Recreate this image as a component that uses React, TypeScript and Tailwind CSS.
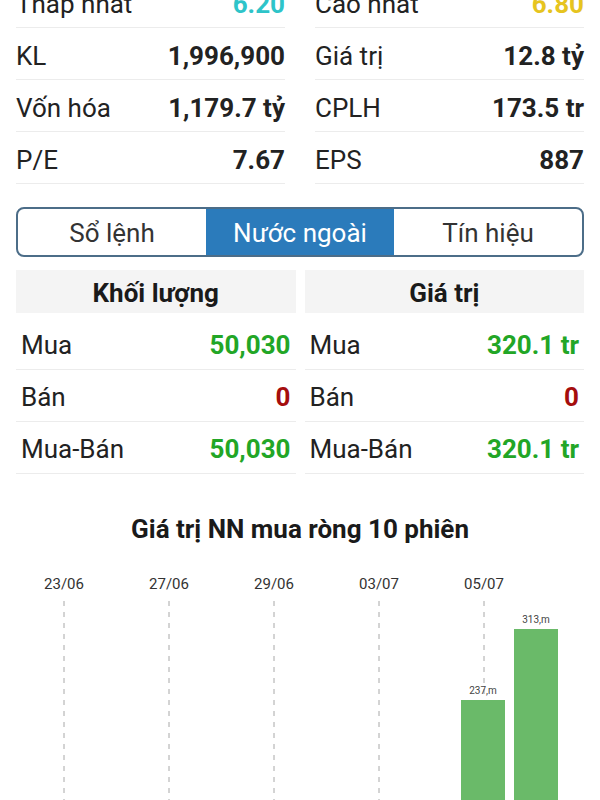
import React from 'react';

type Stat = { label: string; value: string; color?: string };

const stats: [Stat, Stat][] = [
  [
    { label: 'Thấp nhất', value: '6.20', color: 'text-[#2ec4c9]' },
    { label: 'Cao nhất', value: '6.80', color: 'text-[#e6c41f]' },
  ],
  [
    { label: 'KL', value: '1,996,900' },
    { label: 'Giá trị', value: '12.8 tỷ' },
  ],
  [
    { label: 'Vốn hóa', value: '1,179.7 tỷ' },
    { label: 'CPLH', value: '173.5 tr' },
  ],
  [
    { label: 'P/E', value: '7.67' },
    { label: 'EPS', value: '887' },
  ],
];

const foreign = [
  {
    title: 'Khối lượng',
    rows: [
      { label: 'Mua', value: '50,030', color: 'text-[#22a626]' },
      { label: 'Bán', value: '0', color: 'text-[#a50d0d]' },
      { label: 'Mua-Bán', value: '50,030', color: 'text-[#22a626]' },
    ],
  },
  {
    title: 'Giá trị',
    rows: [
      { label: 'Mua', value: '320.1 tr', color: 'text-[#22a626]' },
      { label: 'Bán', value: '0', color: 'text-[#a50d0d]' },
      { label: 'Mua-Bán', value: '320.1 tr', color: 'text-[#22a626]' },
    ],
  },
];

const dates = [
  { x: 64, label: '23/06' },
  { x: 169, label: '27/06' },
  { x: 274, label: '29/06' },
  { x: 379, label: '03/07' },
  { x: 484, label: '05/07' },
];

const bars = [
  { x: 461, top: 139, label: '237,m' },
  { x: 514, top: 68, label: '313,m' },
];

const StatRow = ({ label, value, color }: Stat) => (
  <div className="h-[52px] pt-[5px] flex items-center justify-between border-b border-[#ececec]">
    <span className="text-[#222]">{label}</span>
    <span className={`font-bold ${color ?? 'text-[#222]'}`}>{value}</span>
  </div>
);

const NetBuyChart = () => (
  <svg width={600} height={240} className="block">
    {dates.map((d) => (
      <g key={d.label}>
        <text x={d.x} y={28} textAnchor="middle" fontSize={15} fill="#333" fontFamily="Roboto, sans-serif">
          {d.label}
        </text>
        <line x1={d.x} y1={40} x2={d.x} y2={240} stroke="#a8a8a8" strokeWidth={1} strokeDasharray="5 6" />
      </g>
    ))}
    {bars.map((b) => (
      <g key={b.label}>
        <rect x={b.x} y={b.top} width={44} height={240 - b.top} fill="#6aba69" />
        <text x={b.x + 22} y={b.top - 6} textAnchor="middle" fontSize={10} fill="#444" fontFamily="Roboto, sans-serif">
          {b.label}
        </text>
      </g>
    ))}
  </svg>
);

export default function App() {
  return (
    <div className="w-[600px] h-[800px] overflow-hidden bg-white text-[26px] text-[#222] font-['Roboto',sans-serif]">
      {/* top stats */}
      <div className="-mt-[24px] px-4 grid grid-cols-2 gap-x-[30px]">
        <div>
          {stats.map((pair) => (
            <StatRow key={pair[0].label} {...pair[0]} />
          ))}
        </div>
        <div>
          {stats.map((pair) => (
            <StatRow key={pair[1].label} {...pair[1]} />
          ))}
        </div>
      </div>

      {/* tabs */}
      <div className="mt-[23px] mx-4 h-[50px] grid grid-cols-3 border-2 border-[#4c6d88] rounded-lg overflow-hidden">
        <button className="pt-[3px] flex items-center justify-center text-[#333]">Sổ lệnh</button>
        <button className="pt-[3px] flex items-center justify-center bg-[#2b7bbb] text-white">Nước ngoài</button>
        <button className="pt-[3px] flex items-center justify-center text-[#333]">Tín hiệu</button>
      </div>

      {/* foreign trading */}
      <div className="mt-[13px] px-4 grid grid-cols-2 gap-x-[9px]">
        {foreign.map((col) => (
          <div key={col.title}>
            <div className="h-[43px] pt-[4px] bg-[#f4f4f4] flex items-center justify-center font-bold text-[#1a1a1a]">
              {col.title}
            </div>
            <div className="mt-[5px]">
              {col.rows.map((r) => (
                <div key={r.label} className="h-[52px] pt-[4px] px-[5px] flex items-center justify-between border-b border-[#ececec]">
                  <span>{r.label}</span>
                  <span className={`font-bold ${r.color}`}>{r.value}</span>
                </div>
              ))}
            </div>
          </div>
        ))}
      </div>

      {/* chart */}
      <h2 className="mt-[40px] h-[30px] flex items-center justify-center font-bold text-[#1a1a1a]">
        Giá trị NN mua ròng 10 phiên
      </h2>
      <div className="mt-[17px]">
        <NetBuyChart />
      </div>
    </div>
  );
}
